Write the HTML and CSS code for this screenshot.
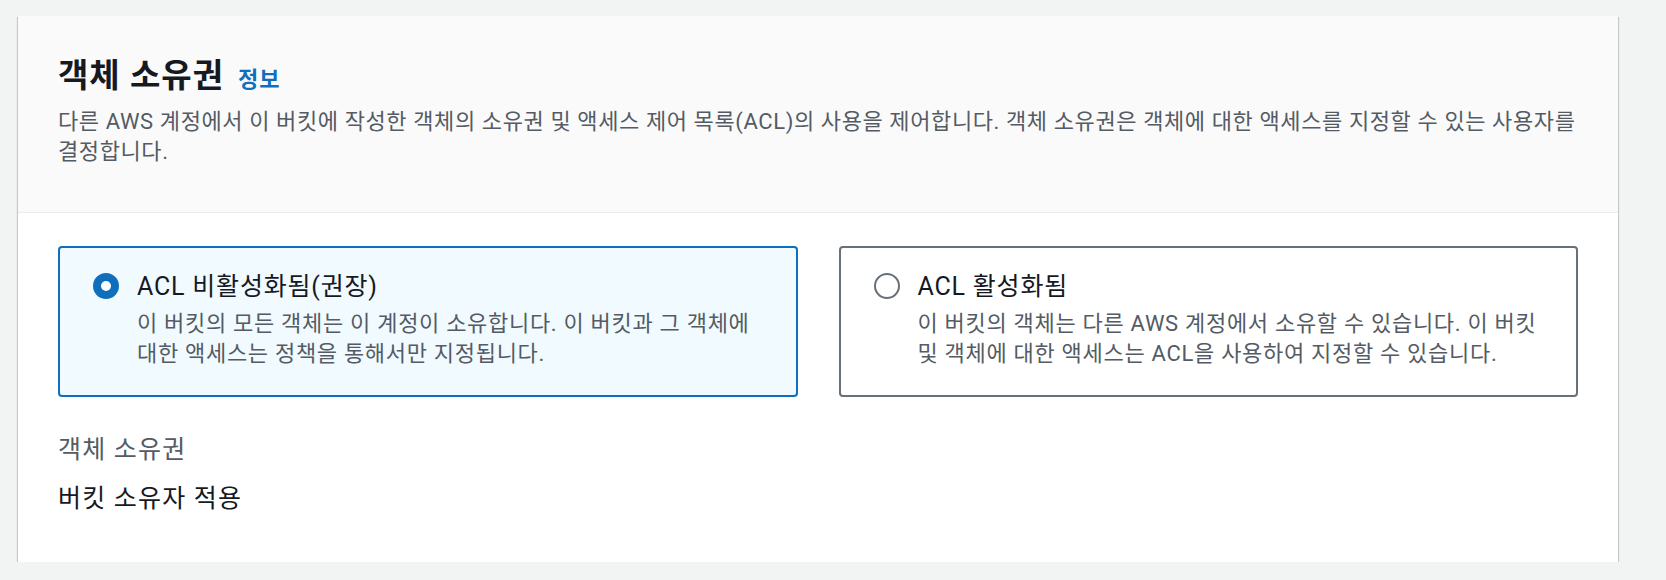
FILE: index.html
```html
<!DOCTYPE html>
<html lang="ko">
<head>
    <meta charset="UTF-8">
    <meta name="viewport" content="width=device-width, initial-scale=1.0">
    <title>객체 소유권</title>
    <link rel="stylesheet" href="styles.css">
</head>
<body>
    <div class="container">
        <div class="container-header">
            <div class="title-row">
                <h2>객체 소유권</h2>
                <a class="info-link" href="#">정보</a>
            </div>
            <p class="description">다른 AWS 계정에서 이 버킷에 작성한 객체의 소유권 및 액세스 제어 목록(ACL)의 사용을 제어합니다. 객체 소유권은 객체에 대한 액세스를 지정할 수 있는 사용자를 결정합니다.</p>
        </div>

        <div class="container-body">
            <div class="tiles">
                <label class="tile selected">
                    <span class="radio"></span>
                    <span class="tile-text">
                        <span class="tile-label">ACL 비활성화됨(권장)</span>
                        <span class="tile-desc">이 버킷의 모든 객체는 이 계정이 소유합니다. 이 버킷과 그 객체에 대한 액세스는 정책을 통해서만 지정됩니다.</span>
                    </span>
                </label>
                <label class="tile">
                    <span class="radio"></span>
                    <span class="tile-text">
                        <span class="tile-label">ACL 활성화됨</span>
                        <span class="tile-desc">이 버킷의 객체는 다른 AWS 계정에서 소유할 수 있습니다. 이 버킷 및 객체에 대한 액세스는 ACL을 사용하여 지정할 수 있습니다.</span>
                    </span>
                </label>
            </div>

            <div class="field">
                <div class="field-label">객체 소유권</div>
                <div class="field-value">버킷 소유자 적용</div>
            </div>
        </div>
    </div>
</body>
</html>
```

FILE: styles.css
```css
body {
    margin: 0;
    background-color: #f2f3f3;
    color: #16191f;
    font-family: Roboto, "Noto Sans CJK KR", sans-serif;
    word-break: keep-all;
}

.container {
    margin: 16px 48px 0 18px;
    background-color: #fff;
    box-shadow: 0 1px 1px 0 rgba(0, 28, 36, 0.3),
                1px 1px 1px 0 rgba(0, 28, 36, 0.15),
                -1px 1px 1px 0 rgba(0, 28, 36, 0.15);
}

.container-header {
    background-color: #fafafa;
    border-bottom: 1px solid #eaeded;
    padding: 40px 28px 45px 40px;
}

.title-row {
    display: flex;
    align-items: baseline;
}

h2 {
    margin: 0;
    font-size: 33px;
    line-height: 40px;
    font-weight: 700;
    letter-spacing: 1px;
}

.info-link {
    margin-left: 14px;
    font-size: 22px;
    font-weight: 700;
    letter-spacing: 1px;
    color: #0f6fbd;
    text-decoration: none;
}

.description {
    margin: 11px 0 0;
    font-size: 22px;
    line-height: 30px;
    letter-spacing: 0.6px;
    color: #545b64;
}

.container-body {
    padding: 33px 40px 47px;
}

.tiles {
    display: grid;
    grid-template-columns: 1fr 1fr;
    gap: 41px;
}

.tile {
    display: flex;
    gap: 18px;
    padding: 23px 30px 26px 33px;
    border: 2px solid #687078;
    border-radius: 4px;
    cursor: pointer;
}

.tile.selected {
    border-color: #0f6fbd;
    background-color: #f1faff;
}

.radio {
    flex: none;
    box-sizing: border-box;
    width: 26px;
    height: 26px;
    margin-top: 2px;
    border: 2px solid #687078;
    border-radius: 50%;
    background-color: #fff;
}

.selected .radio {
    border: 8px solid #0f6fbd;
}

.tile-label {
    display: block;
    font-size: 25px;
    line-height: 32px;
    letter-spacing: 0.8px;
}

.tile-desc {
    display: block;
    margin-top: 6px;
    font-size: 22px;
    line-height: 30px;
    letter-spacing: 0.7px;
    color: #545b64;
}

.field {
    margin-top: 37px;
}

.field-label {
    font-size: 25px;
    line-height: 32px;
    letter-spacing: 1.2px;
    color: #545b64;
}

.field-value {
    margin-top: 17px;
    font-size: 25px;
    line-height: 32px;
    letter-spacing: 1.2px;
}
```
